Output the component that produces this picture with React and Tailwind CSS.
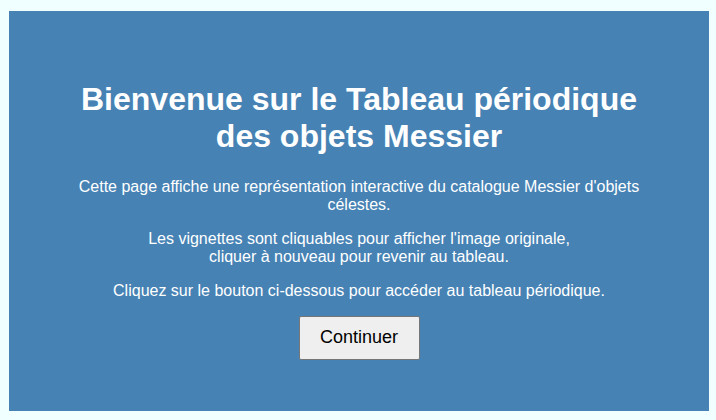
import React from 'react';

const App = () => {
  return (
    <div className="min-h-screen bg-[#f0ffff] pt-[11px] pl-[9px]" style={{ fontFamily: '"Liberation Sans", Arial, sans-serif' }}>
      <div className="w-[700px] h-[400px] bg-[#4682b4] text-white text-center px-[60px] pt-[70px]">
        <h1 className="text-[32px] font-bold leading-[1.15] mb-[23px]">
          Bienvenue sur le Tableau périodique des objets Messier
        </h1>
        <p className="text-[16px] leading-[18px] mb-4">
          Cette page affiche une représentation interactive du catalogue Messier d'objets célestes.
        </p>
        <p className="text-[16px] leading-[18px] mb-4">
          Les vignettes sont cliquables pour afficher l'image originale,
          <br />
          cliquer à nouveau pour revenir au tableau.
        </p>
        <p className="text-[16px] leading-[18px] mb-[16px]">
          Cliquez sur le bouton ci-dessous pour accéder au tableau périodique.
        </p>
        <button className="w-[121px] h-[44px] bg-[#efefef] border border-[#767676] rounded-[2px] text-black text-[18px]">
          Continuer
        </button>
      </div>
    </div>
  );
};

export default App;
